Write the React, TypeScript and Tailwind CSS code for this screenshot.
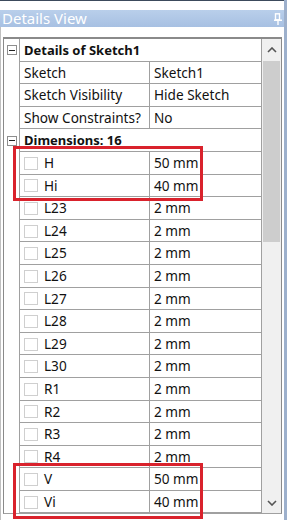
import React from 'react';

type Row =
  | { kind: 'group'; label: string }
  | { kind: 'prop'; name: string; value: string }
  | { kind: 'dim'; name: string; value: string };

const rows: Row[] = [
  { kind: 'group', label: 'Details of Sketch1' },
  { kind: 'prop', name: 'Sketch', value: 'Sketch1' },
  { kind: 'prop', name: 'Sketch Visibility', value: 'Hide Sketch' },
  { kind: 'prop', name: 'Show Constraints?', value: 'No' },
  { kind: 'group', label: 'Dimensions: 16' },
  { kind: 'dim', name: 'H', value: '50 mm' },
  { kind: 'dim', name: 'Hi', value: '40 mm' },
  { kind: 'dim', name: 'L23', value: '2 mm' },
  { kind: 'dim', name: 'L24', value: '2 mm' },
  { kind: 'dim', name: 'L25', value: '2 mm' },
  { kind: 'dim', name: 'L26', value: '2 mm' },
  { kind: 'dim', name: 'L27', value: '2 mm' },
  { kind: 'dim', name: 'L28', value: '2 mm' },
  { kind: 'dim', name: 'L29', value: '2 mm' },
  { kind: 'dim', name: 'L30', value: '2 mm' },
  { kind: 'dim', name: 'R1', value: '2 mm' },
  { kind: 'dim', name: 'R2', value: '2 mm' },
  { kind: 'dim', name: 'R3', value: '2 mm' },
  { kind: 'dim', name: 'R4', value: '2 mm' },
  { kind: 'dim', name: 'V', value: '50 mm' },
  { kind: 'dim', name: 'Vi', value: '40 mm' },
];

function Collapse() {
  return (
    <div className="w-[10px] h-[10px] border border-[#8e8e8e] bg-white flex items-center justify-center">
      <div className="w-[6px] h-[1.5px] bg-[#222]" />
    </div>
  );
}

function GridRow({ row }: { row: Row }) {
  if (row.kind === 'group') {
    return (
      <div className="flex h-[22.6px]">
        <div className="w-[16px] shrink-0 flex items-center justify-center border-r border-[#a0a0a0]">
          <Collapse />
        </div>
        <div className="flex-1 flex items-center pl-[4px] pt-[1px] border-b border-[#a0a0a0] font-bold text-[13px] text-[#111]">
          {row.label}
        </div>
      </div>
    );
  }
  return (
    <div className="flex h-[22.6px]">
      <div className="w-[16px] shrink-0 border-r border-[#a0a0a0]" />
      <div className="w-[130px] shrink-0 flex items-center pl-[4px] pt-[1px] border-b border-r border-[#a0a0a0] text-[#111]">
        {row.kind === 'dim' && (
          <div className="w-[14px] h-[13px] border border-[#cfcfcf] bg-white mr-[6px] shrink-0" />
        )}
        {row.name}
      </div>
      <div className="flex-1 flex items-center pl-[4px] pt-[1px] border-b border-[#a0a0a0] text-[#111]">
        {row.value}
      </div>
    </div>
  );
}

export default function App() {
  return (
    <div
      className="relative w-[287px] h-[520px] overflow-hidden bg-white flex flex-col border-r-[3px] border-[#9db0cc] text-[13.6px]"
      style={{ fontFamily: '"Noto Sans", "Open Sans", sans-serif' }}
    >
      <div className="h-[10px] shrink-0 border-t border-[#3c4a5c] bg-white" />
      <div className="h-[17px] shrink-0 bg-gradient-to-b from-[#b9cfeb] to-[#a7c0e2] flex items-center justify-between pl-[2px] pr-[2px]">
        <span className="text-white text-[15px] leading-none">Details View</span>
        <svg width="8" height="12" viewBox="0 0 8 12" fill="none" stroke="#ffffff" strokeWidth="1.4">
          <rect x="1.5" y="0.8" width="4" height="6" />
          <path d="M0 7.2h8M4 7.2v4.8" />
        </svg>
      </div>
      <div className="h-[10px] shrink-0 border-l border-[#c0c0c0]" />
      <div className="flex-1 flex border-l border-[#c0c0c0] pl-[2px] pr-[2px] pb-[6px]">
        <div className="flex-1 flex border border-t-2 border-[#8a8a8a] border-b-[#a0a0a0]">
          <div className="flex-1 flex flex-col">
            {rows.map((r, i) => (
              <GridRow key={i} row={r} />
            ))}
          </div>
          <div className="w-[20px] shrink-0 bg-[#f0f0f0] border-l border-[#a0a0a0] flex flex-col items-center">
            <div className="h-[22px] w-full flex items-center justify-center">
              <svg width="10" height="6" viewBox="0 0 10 6" fill="none" stroke="#555" strokeWidth="1.6">
                <path d="M1 5l4-4 4 4" />
              </svg>
            </div>
            <div className="w-[17px] h-[181px] bg-[#cdcdcd]" />
            <div className="flex-1" />
            <div className="h-[20px] w-full flex items-center justify-center">
              <svg width="10" height="6" viewBox="0 0 10 6" fill="none" stroke="#555" strokeWidth="1.6">
                <path d="M1 1l4 4 4-4" />
              </svg>
            </div>
          </div>
        </div>
      </div>
      <div className="absolute left-[13px] top-[146px] w-[190px] h-[55px] border-[3px] border-[#d9222c]" />
      <div className="absolute left-[13px] top-[463px] w-[190px] h-[56px] border-[3px] border-[#d9222c]" />
    </div>
  );
}
